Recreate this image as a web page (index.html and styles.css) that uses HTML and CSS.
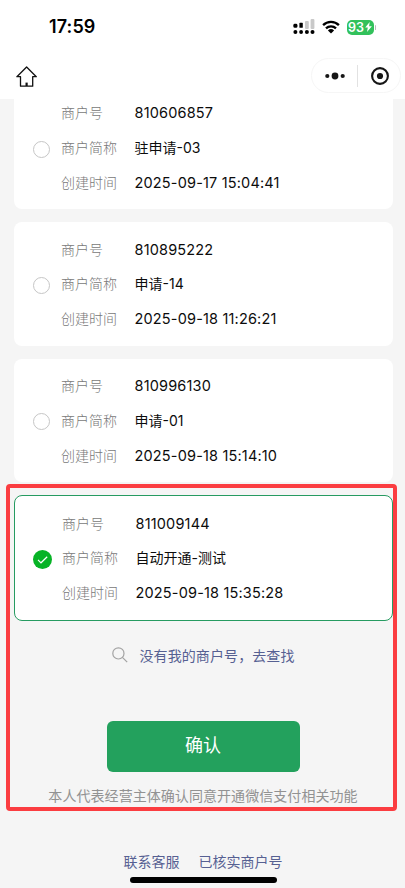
FILE: index.html
```html
<!DOCTYPE html>
<html lang="zh-CN">
<head>
<meta charset="utf-8">
<meta name="viewport" content="width=device-width, initial-scale=1">
<title>选择商户号</title>
<link rel="stylesheet" href="styles.css">
</head>
<body>
<div class="screen">
  <header class="header">
    <div class="status">
      <span class="time">17:59</span>
      <div class="status-icons">
        <svg class="signal" width="22" height="16" viewBox="0 0 22 16">
          <g fill="#c9c9c9"><rect x="12" y="2" width="3.8" height="8" rx="1"/><rect x="17.6" y="0" width="3.8" height="10" rx="1"/></g>
          <g fill="#000"><rect x="0.4" y="4.8" width="4" height="4" rx="1.4"/><rect x="6.4" y="3.8" width="3.4" height="5" rx=".6"/><circle cx="2.4" cy="13" r="2"/><circle cx="8.1" cy="13" r="1.9"/><circle cx="13.9" cy="13" r="2"/><circle cx="19.5" cy="13" r="2"/></g>
        </svg>
        <svg class="wifi" width="18" height="14" viewBox="0 0 18 14">
          <g fill="none" stroke="#000" stroke-width="2.3"><path d="M1.1 5.1a11.2 11.2 0 0 1 15.8 0"/><path d="M4 8.4a7.1 7.1 0 0 1 10 0"/></g>
          <path d="M5.9 10.4a4.5 4.5 0 0 1 6.2 0L9 13.5z" fill="#000"/>
        </svg>
        <div class="battery"><span>93</span><svg width="7" height="10" viewBox="0 0 7 10"><path d="M4.7 0 0.2 5.6h2.6L2 10 6.9 4.2H4.1z" fill="#fff"/></svg></div>
        <i class="battery-tip"></i>
      </div>
    </div>
    <nav class="nav">
      <svg class="home" width="22" height="22" viewBox="0 0 22 22" fill="none" stroke="#111" stroke-width="1.3" stroke-linejoin="round"><path d="M10.6 1 .9 10.7h3.6v9.5h12.2v-9.5h3.6z"/><path d="M10.6 16.6v3.4" stroke-width="2.2"/></svg>
      <div class="capsule">
        <svg width="20" height="8" viewBox="0 0 20 8" fill="#161616"><circle cx="2.3" cy="4" r="2.1"/><circle cx="10" cy="4" r="3.4"/><circle cx="17.7" cy="4" r="2.1"/></svg>
        <i class="divider"></i>
        <svg width="18" height="18" viewBox="0 0 18 18"><circle cx="9" cy="9" r="7.9" fill="none" stroke="#161616" stroke-width="2.1"/><circle cx="9" cy="9" r="3.1" fill="#161616"/></svg>
      </div>
    </nav>
  </header>
  <main class="list">
    <section class="card">
      <i class="radio"></i>
      <dl class="info"><dt>商户号</dt><dd class="num">810606857</dd><dt>商户简称</dt><dd>驻申请-03</dd><dt>创建时间</dt><dd class="num">2025-09-17 15:04:41</dd></dl>
    </section>
    <section class="card">
      <i class="radio"></i>
      <dl class="info"><dt>商户号</dt><dd class="num">810895222</dd><dt>商户简称</dt><dd>申请-14</dd><dt>创建时间</dt><dd class="num">2025-09-18 11:26:21</dd></dl>
    </section>
    <section class="card">
      <i class="radio"></i>
      <dl class="info"><dt>商户号</dt><dd class="num">810996130</dd><dt>商户简称</dt><dd>申请-01</dd><dt>创建时间</dt><dd class="num">2025-09-18 15:14:10</dd></dl>
    </section>
    <section class="card selected">
      <svg class="check" width="19" height="19" viewBox="0 0 19 19"><circle cx="9.5" cy="9.5" r="9.5" fill="#07b326"/><path d="m5 9.8 3 3 6.2-6" fill="none" stroke="#fff" stroke-width="1.2"/></svg>
      <dl class="info"><dt>商户号</dt><dd class="num">811009144</dd><dt>商户简称</dt><dd>自动开通-测试</dd><dt>创建时间</dt><dd class="num">2025-09-18 15:35:28</dd></dl>
    </section>
  </main>
  <a class="search"><svg width="16" height="16" viewBox="0 0 16 16" fill="none" stroke="#a3a3a3" stroke-width="1.2"><circle cx="6.4" cy="6.4" r="5.6"/><path d="m10.4 10.4 4.8 4.8"/></svg><span>没有我的商户号，去查找</span></a>
  <button class="confirm">确认</button>
  <p class="agreement">本人代表经营主体确认同意开通微信支付相关功能</p>
  <footer class="links"><a>联系客服</a><a>已核实商户号</a></footer>
  <div class="home-bar"></div>
  <div class="highlight"></div>
</div>
</body>
</html>
```

FILE: styles.css
```css
* { box-sizing: border-box; }
body { margin: 0; background: #f5f5f5; font-family: Inter, "Noto Sans CJK SC", sans-serif; }
.screen { position: relative; width: 405px; height: 888px; overflow: hidden; background: #f5f5f5; display: flex; flex-direction: column; align-items: center; }
.header { position: relative; z-index: 1; width: 100%; height: 99px; flex: none; background: #fff; }
.status { display: flex; justify-content: space-between; height: 54px; padding: 0 28px 0 49px; align-items: center; }
.time { font-size: 18px; font-weight: 600; line-height: 22px; color: #000; letter-spacing: 0.1px; }
.status-icons { display: flex; align-items: center; }
.wifi { margin-left: 7px; }
.battery { margin-left: 7px; width: 27px; height: 15px; border-radius: 5px; background: #32c15b; color: #fff; font-size: 12.5px; font-weight: 600; line-height: 15px; display: flex; align-items: center; justify-content: center; gap: 1px; }
.battery-tip { width: 1.5px; height: 5px; margin: 0 1px; border-radius: 1px; background: #bbb; }
.nav { display: flex; justify-content: space-between; height: 45px; padding: 4px 4px 0 16px; }
.home { margin-top: 7.5px; }
.capsule { width: 90px; height: 35px; border: 1px solid #f6f6f6; border-radius: 18px; display: flex; align-items: center; padding-left: 13px; }
.divider { width: 1px; height: 22px; margin: 0 13px 0 12px; background: #e2e2e2; }
.list { width: 379px; margin: -13px 0 0 2px; display: flex; flex-direction: column; gap: 13px; }
.card { height: 123.4px; padding: 10px 0 0 19px; border-radius: 8px; background: #fff; display: flex; }
.radio { width: 17px; height: 17px; margin: 44.5px 11px 0 0; border: 1px solid #c6c6c6; border-radius: 50%; }
.info { margin: 0; display: grid; grid-template-columns: 73.5px auto; grid-auto-rows: 34.7px; align-items: center; font-size: 14px; line-height: 20px; }
.info dt { color: #787878; font-weight: 300; }
.info dd { margin: 0; color: #0c0c0c; white-space: nowrap; }
.info .num { font-size: 14.5px; letter-spacing: 0.17px; }
.selected { height: 126px; padding: 10px 0 0 18px; border: 1px solid #269b61; }
.check { margin: 44px 10px 0 0; }
.search { display: flex; align-items: center; gap: 11px; margin: 25px 0 0 2px; height: 20px; color: #566092; font-size: 14px; line-height: 20px; }
.search svg { margin-top: -2px; }
.search span { letter-spacing: 0.1px; }
.confirm { width: 193px; height: 51px; margin: 55px 0 0 1px; padding: 0 0 1px; border: 0; border-radius: 6px; background: #23a15d; color: #fff; font-family: inherit; font-size: 18px; line-height: 26px; }
.agreement { margin: 14px 0 0 1px; color: #929292; font-size: 14px; line-height: 20px; letter-spacing: 0.06px; }
.links { display: flex; gap: 19px; margin: 46px 0 0 1px; color: #566092; font-size: 14px; line-height: 20px; }
.home-bar { width: 147px; height: 6px; margin: 5px 0 0 2px; border-radius: 3px; background: #000; flex: none; }
.highlight { position: absolute; left: 6px; top: 484px; width: 391px; height: 327px; border: 4px solid #fb3d41; border-radius: 4px; z-index: 2; pointer-events: none; }
```
